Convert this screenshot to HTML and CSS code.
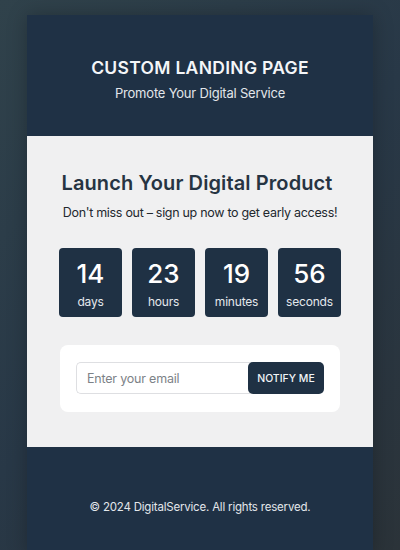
FILE: index.html
```html
<!DOCTYPE html>
<html lang="en">
<head>
<meta charset="utf-8">
<title>Custom Landing Page</title>
<link rel="stylesheet" href="styles.css">
</head>
<body>
<div class="page">
  <header class="hero">
    <h1 class="hero-title">CUSTOM LANDING PAGE</h1>
    <p class="hero-sub">Promote Your Digital Service</p>
  </header>
  <main class="main">
    <h2 class="main-title">Launch Your Digital Product</h2>
    <p class="main-sub">Don't miss out – sign up now to get early access!</p>
    <div class="countdown">
      <div class="unit"><span class="num">14</span><span class="label">days</span></div>
      <div class="unit"><span class="num">23</span><span class="label">hours</span></div>
      <div class="unit"><span class="num">19</span><span class="label">minutes</span></div>
      <div class="unit"><span class="num">56</span><span class="label">seconds</span></div>
    </div>
    <form class="card">
      <input class="email" type="email" placeholder="Enter your email">
      <button class="notify" type="button">NOTIFY ME</button>
    </form>
  </main>
  <footer class="footer">
    <p>© 2024 DigitalService. All rights reserved.</p>
  </footer>
</div>
</body>
</html>
```
FILE: styles.css
```css
* { box-sizing: border-box; }
html, body { height: 100%; }
body {
  margin: 0;
  font-family: Inter, "Noto Sans", sans-serif;
  background: linear-gradient(135deg, #30424b 0%, #283847 50%, #2b3339 100%);
  overflow: hidden;
}
.page {
  width: 346px;
  margin: 15px auto 0;
  box-shadow: 0 0 18px rgba(0, 0, 0, 0.25);
  background: #1f3145;
}
.hero {
  background: #1f3145;
  padding: 42px 20px 35px;
  text-align: center;
}
.hero-title {
  margin: 0;
  color: #f4f6f8;
  font-size: 17.5px;
  line-height: 22px;
  font-weight: 600;
  letter-spacing: 0.3px;
}
.hero-sub {
  margin: 6px 0 0;
  color: #e2e6ea;
  font-size: 13px;
  line-height: 16px;
  letter-spacing: -0.2px;
}
.main {
  background: #f0f0f1;
  padding: 35px 20px 35px;
  text-align: center;
}
.main-title {
  margin: 0 6px 0 0;
  color: #263442;
  font-size: 20px;
  line-height: 24px;
  font-weight: 600;
  letter-spacing: 0.1px;
}
.main-sub {
  margin: 10px 0 0;
  color: #22282e;
  font-size: 12.5px;
  line-height: 16px;
  letter-spacing: -0.3px;
  white-space: nowrap;
}
.countdown {
  margin-top: 27px;
  display: flex;
  justify-content: center;
  gap: 10px;
}
.unit {
  width: 63px;
  height: 69px;
  background: #1f3144;
  border-radius: 4px;
  padding-top: 10px;
  display: flex;
  flex-direction: column;
  align-items: center;
  color: #ffffff;
}
.num {
  font-size: 26px;
  line-height: 32px;
  font-weight: 500;
}
.label {
  margin-top: 4px;
  font-size: 12px;
  line-height: 15px;
  color: #e4e8ec;
  letter-spacing: -0.2px;
}
.card {
  margin: 28px 13px 0;
  background: #ffffff;
  border-radius: 8px;
  padding: 17px 16px 18px;
  display: flex;
}
.email {
  flex: 1;
  min-width: 0;
  height: 32px;
  border: 1px solid #dedfe2;
  border-right: none;
  border-radius: 5px 0 0 5px;
  padding: 0 10px;
  font-family: inherit;
  font-size: 12.5px;
  letter-spacing: -0.2px;
  color: #333;
  background: #fff;
  outline: none;
}
.email::placeholder { color: #7d8287; }
.notify {
  width: 76px;
  height: 32px;
  border: none;
  border-radius: 5px;
  background: #1f3144;
  color: #f1f4f7;
  font-family: inherit;
  font-size: 10.5px;
  font-weight: 500;
  padding: 0;
  margin-left: -4px;
}
.footer {
  background: #1f3145;
  padding: 53px 20px 40px;
  text-align: center;
}
.footer p {
  margin: 0;
  color: #e3e7eb;
  font-size: 11.5px;
  line-height: 15px;
  letter-spacing: -0.2px;
}
```
